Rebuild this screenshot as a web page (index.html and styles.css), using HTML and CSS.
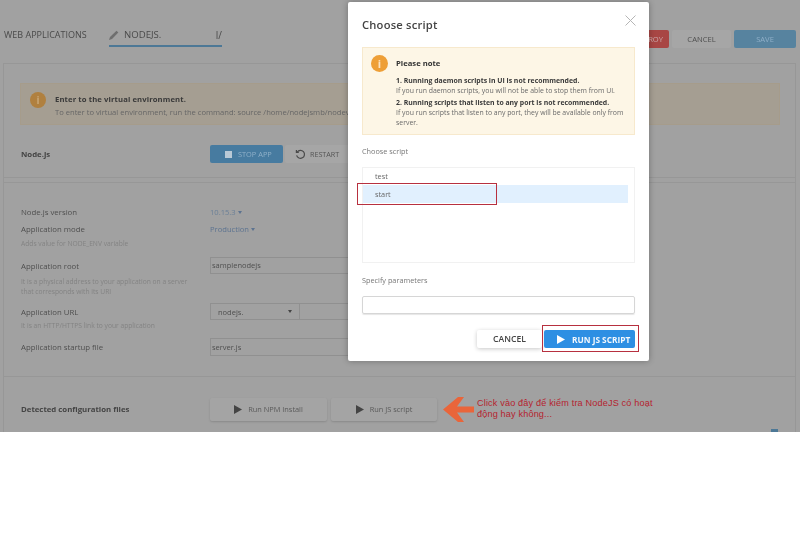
FILE: index.html
```html
<!DOCTYPE html>
<html lang="en">
<head>
<meta charset="utf-8">
<title>Choose script</title>
<link rel="stylesheet" href="styles.css">
</head>
<body>
<div class="stage">
  <div class="page">
    <header class="top">
      <span class="crumb">WEB APPLICATIONS</span>
      <div class="crumb-edit">
        <svg class="pencil" width="10" height="10" viewBox="0 0 10 10"><path d="M0 10 L1 7 L7.5 .8 L9.3 2.5 L3 9 Z" fill="#6f6f6f"/></svg>
        <span class="crumb-name">NODEJS.</span>
        <span class="crumb-tail">l/</span>
      </div>
      <div class="top-actions">
        <button class="tbtn tbtn-red">DESTROY</button>
        <button class="tbtn tbtn-plain">CANCEL</button>
        <button class="tbtn tbtn-blue">SAVE</button>
      </div>
    </header>
    <main class="panel">
      <section class="sec sec-first">
        <div class="venv">
          <span class="venv-icon">i</span>
          <div class="venv-body">
            <div class="venv-title">Enter to the virtual environment.</div>
            <div class="venv-text">To enter to virtual environment, run the command: source /home/nodejsmb/nodevenv/</div>
          </div>
        </div>
        <div class="row-head">
          <span class="strong-label">Node.js</span>
          <button class="act act-blue">
            <svg width="7" height="7" viewBox="0 0 7 7"><rect width="7" height="7" fill="#b9c9d6"/></svg>
            STOP APP
          </button>
          <button class="act act-plain">
            <svg width="11" height="11" viewBox="0 0 11 11" fill="none" stroke="#4a4a4a" stroke-width="1.2"><path d="M2.2 3 A4 4 0 1 1 1.6 6.4"/><path d="M1.4 1 V3.4 H3.8"/></svg>
            RESTART
          </button>
        </div>
      </section>
      <div class="sec sec-gap"></div>
      <section class="sec sec-form">
        <div class="frow frow-a">
          <span class="flabel">Node.js version</span>
          <span class="flink flink-pale">10.15.3 <i class="caret"></i></span>
        </div>
        <div class="frow frow-b">
          <span class="flabel">Application mode</span>
          <span class="flink">Production <i class="caret"></i></span>
        </div>
        <p class="hint hint-env">Adds value for NODE_ENV variable</p>
        <div class="frow frow-input">
          <span class="flabel">Application root</span>
          <span class="finput">samplenodejs</span>
        </div>
        <p class="hint hint-root">It is a physical address to your application on a server<br>that corresponds with its URI</p>
        <div class="frow frow-input frow-url">
          <span class="flabel">Application URL</span>
          <span class="fselect">nodejs. <i class="caret caret-dark"></i></span>
          <span class="finput finput-rest"></span>
        </div>
        <p class="hint hint-url">It is an HTTP/HTTPS link to your application</p>
        <div class="frow frow-input frow-file">
          <span class="flabel">Application startup file</span>
          <span class="finput">server.js</span>
        </div>
      </section>
      <section class="sec sec-detect">
        <span class="strong-label">Detected configuration files</span>
        <button class="run run-npm"><svg width="8" height="9" viewBox="0 0 8 9"><path d="M0 0 L8 4.5 L0 9 Z" fill="#444"/></svg>Run NPM Install</button>
        <button class="run run-js"><svg width="8" height="9" viewBox="0 0 8 9"><path d="M0 0 L8 4.5 L0 9 Z" fill="#444"/></svg>Run JS script</button>
      </section>
    </main>
    <span class="scrollmark"></span>
  </div>

  <svg class="big-arrow" width="31" height="25" viewBox="0 0 31 25"><path d="M0 12.5 L15 0 H21 L14 9.5 H31 V15.5 H14 L21 25 H15 Z" fill="#e9653a"/></svg>
  <p class="note">Click vào đây để kiểm tra NodeJS có hoạt<br>động hay không...</p>

  <div class="modal">
    <div class="modal-head">
      <h2 class="modal-title">Choose script</h2>
      <svg class="modal-x" width="11" height="11" viewBox="0 0 11 11" stroke="#b5b5b5" stroke-width="1"><path d="M.5 .5 L10.5 10.5 M10.5 .5 L.5 10.5"/></svg>
    </div>
    <div class="warn">
      <span class="warn-icon">i</span>
      <div class="warn-body">
        <div class="warn-title">Please note</div>
        <div class="warn-strong first">1. Running daemon scripts in UI is not recommended.</div>
        <div class="warn-text">If you run daemon scripts, you will not be able to stop them from UI.</div>
        <div class="warn-strong">2. Running scripts that listen to any port is not recommended.</div>
        <div class="warn-text">If you run scripts that listen to any port, they will be available only from server.</div>
      </div>
    </div>
    <div class="mlabel mlabel-script">Choose script</div>
    <div class="slist">
      <div class="sitem">test</div>
      <div class="sitem sitem-on">start</div>
    </div>
    <div class="mlabel mlabel-param">Specify parameters</div>
    <div class="minput"></div>
    <div class="mfoot">
      <button class="mbtn mbtn-cancel">CANCEL</button>
      <button class="mbtn mbtn-run"><svg width="8" height="9" viewBox="0 0 8 9"><path d="M0 0 L8 4.5 L0 9 Z" fill="#fff"/></svg>RUN JS SCRIPT</button>
    </div>
    <span class="mark mark-start"></span>
    <span class="mark mark-run"></span>
  </div>
</div>
</body>
</html>
```
FILE: styles.css
```css
* { box-sizing: border-box; }
html, body { margin: 0; padding: 0; background: #fff; }
body { font-family: "Open Sans", sans-serif; color: #555; }
button { font-family: inherit; border: 0; padding: 0; cursor: pointer; }
p { margin: 0; }

.stage { position: relative; width: 800px; height: 550px; overflow: hidden; background: #fff; }
.page { position: relative; height: 432px; overflow: hidden; background: #a1a1a1; filter: blur(.35px); }

.top { display: flex; align-items: flex-start; height: 63px; padding: 27px 4px 0 4px; }
.crumb { font-size: 9px; line-height: 16px; color: #4a4a4a; width: 105px; }
.crumb-edit { display: flex; align-items: center; width: 113px; height: 20px; border-bottom: 2px solid #4d7896; padding-bottom: 2px; }
.pencil { margin-right: 5px; }
.crumb-name { font-size: 9.6px; line-height: 16px; color: #4a4a4a; flex: 1; }
.crumb-tail { font-size: 10px; line-height: 16px; color: #4a4a4a; }
.top-actions { display: flex; gap: 3px; margin-left: auto; margin-top: 3px; }
.tbtn { height: 18px; font-size: 7.6px; border-radius: 2px; }
.tbtn-red { width: 62px; padding-right: 6px; text-align: right; background: #a84644; color: #caa; }
.tbtn-plain { width: 59px; background: #a6a6a6; color: #4e4e4e; }
.tbtn-blue { width: 62px; background: #57839f; color: #8fafc8; }

.panel { width: 793px; margin-left: 3px; border: 1px solid #979797; border-bottom: 0; height: 369px; }
.sec { border-bottom: 1px solid #979797; }
.sec-first { height: 114px; padding: 19px 16px 0 16px; }
.sec-gap { height: 5px; }
.venv { display: flex; align-items: flex-start; gap: 9px; width: 760px; height: 42px; padding: 8px 0 0 9px; background: #a59e92; border: 1px solid #a69c8b; }
.venv-icon { flex: none; display: flex; align-items: center; justify-content: center; width: 16px; height: 16px; border-radius: 50%; background: #b0803f; color: #c9a777; font-size: 10px; font-weight: 700; }
.venv-body { margin-top: 1px; }
.venv-title { font-size: 7.7px; line-height: 12px; font-weight: 700; color: #3a3a3a; letter-spacing: .1px; }
.venv-text { font-size: 7.6px; line-height: 13px; color: #666; white-space: nowrap; margin-top: 1px; }

.row-head { display: flex; align-items: center; margin-top: 20px; height: 18px; padding-left: 1px; }
.strong-label { font-size: 7.8px; font-weight: 700; color: #444; }
.row-head .strong-label { width: 189px; }
.act { display: flex; align-items: center; height: 18px; font-size: 7.4px; border-radius: 2px; }
.act-blue { width: 73px; padding-left: 15px; gap: 6px; background: #477ba0; color: #8fb0c8; }
.act-plain { width: 66px; margin-left: 2px; padding-left: 10px; gap: 4px; font-size: 7.2px; background: #a6a6a6; color: #555; }

.sec-form { height: 194px; padding: 20px 16px 0 17px; }
.frow { display: flex; align-items: center; }
.flabel { width: 189px; flex: none; font-size: 7.8px; line-height: 14px; color: #4f4f4f; }
.frow-a { height: 18px; }
.frow-b { height: 16px; }
.flink { font-size: 7.6px; color: #5c7390; }
.flink-pale { color: #6b8098; }
.caret { display: inline-block; width: 0; height: 0; border-left: 2.5px solid transparent; border-right: 2.5px solid transparent; border-top: 3px solid #5c7390; vertical-align: middle; }
.caret-dark { border-top-color: #444; }
.hint { font-size: 6.7px; line-height: 10px; color: #838383; }
.hint-env { margin-top: 2px; }
.frow-input { height: 17px; margin-top: 8px; }
.finput { flex: none; width: 140px; height: 17px; line-height: 15px; font-size: 7.5px; color: #4f4f4f; padding-left: 1px; border: 1px solid #909090; }
.hint-root { margin-top: 3px; }
.frow-url { margin-top: 6px; }
.fselect { flex: none; display: flex; align-items: center; justify-content: space-between; width: 90px; height: 17px; padding: 0 7px; font-size: 7.5px; color: #4f4f4f; border: 1px solid #909090; }
.finput-rest { width: 50px; border-left: 0; }
.hint-url { margin-top: 1px; }
.frow-file { margin-top: 7px; height: 18px; }
.frow-file .finput { height: 18px; line-height: 16px; }

.sec-detect { display: flex; align-items: center; border-bottom: 0; height: 55px; padding: 9px 16px 0 17px; }
.sec-detect .strong-label { width: 189px; }
.run { display: flex; align-items: center; justify-content: center; gap: 6px; height: 23px; font-size: 7.4px; color: #5a5a5a; background: #a4a4a4; border-radius: 2px; box-shadow: 0 1px 2px #8a8a8a; }
.run-npm { width: 117px; }
.run-js { width: 106px; margin-left: 4px; }
.scrollmark { position: absolute; left: 771px; top: 429px; width: 7px; height: 3px; background: #4d7896; }

.big-arrow { position: absolute; left: 443px; top: 397px; }
.note { position: absolute; left: 477px; top: 398px; font-family: "Liberation Sans", sans-serif; font-size: 9.1px; line-height: 11px; color: #b5232f; letter-spacing: .17px; }

.modal { position: absolute; left: 348px; top: 2px; width: 301px; height: 359px; padding: 0 14px; background: #fff; border-radius: 2px; box-shadow: 0 0 6px rgba(0,0,0,.3); filter: blur(.3px); }
.modal-head { display: flex; align-items: center; justify-content: space-between; height: 45px; }
.modal-title { margin: 0; font-size: 11.2px; font-weight: 600; color: #444; letter-spacing: .2px; }
.modal-x { margin: -8px -1px 0 0; }

.warn { display: flex; gap: 8px; width: 273px; height: 88px; padding: 9px 6px 0 8px; background: #fdf6e6; border: 1px solid #f7e9cd; }
.warn-icon { flex: none; display: flex; align-items: center; justify-content: center; width: 17px; height: 17px; margin-top: -2px; border-radius: 50%; background: #ee9f37; color: #fbe3c2; font-size: 11px; font-weight: 700; }
.warn-title { font-size: 7.7px; line-height: 13px; font-weight: 700; color: #333; }
.warn-strong { font-size: 6.9px; line-height: 10px; font-weight: 700; color: #3a3a3a; margin-top: 2px; }
.warn-strong.first { margin-top: 6px; }
.warn-text { font-size: 6.9px; line-height: 10px; color: #6a6a6a; }

.mlabel { font-size: 7.3px; line-height: 10px; color: #777; }
.mlabel-script { margin-top: 11px; }
.slist { width: 273px; height: 96px; margin-top: 11px; border: 1px solid #f1f1f1; }
.sitem { height: 17px; width: 265px; padding-left: 12px; font-size: 7.3px; line-height: 17px; color: #666; }
.sitem-on { height: 18px; background: #e1f0fe; line-height: 18px; }
.mlabel-param { margin-top: 12px; }
.minput { width: 273px; height: 18px; margin-top: 11px; border: 1px solid #d6d6d6; border-radius: 2px; box-shadow: 0 1px 1px #e6e6e6; }
.mfoot { display: flex; justify-content: flex-end; gap: 2px; margin-top: 16px; }
.mbtn { height: 18px; border-radius: 2px; font-size: 8.6px; font-weight: 600; }
.mbtn-cancel { width: 65px; background: #fff; color: #444; box-shadow: 0 1px 4px rgba(0,0,0,.22); }
.mbtn-run { display: flex; align-items: center; gap: 7px; width: 91px; padding-left: 13px; font-size: 8.3px; font-weight: 700; background: #2d8fe3; color: #f3f8fd; white-space: nowrap; }

.mark { position: absolute; border: 1.5px solid #b7303f; }
.mark-start { left: 9px; top: 181px; width: 140px; height: 22px; }
.mark-run { left: 194px; top: 323px; width: 97px; height: 27px; }
```
